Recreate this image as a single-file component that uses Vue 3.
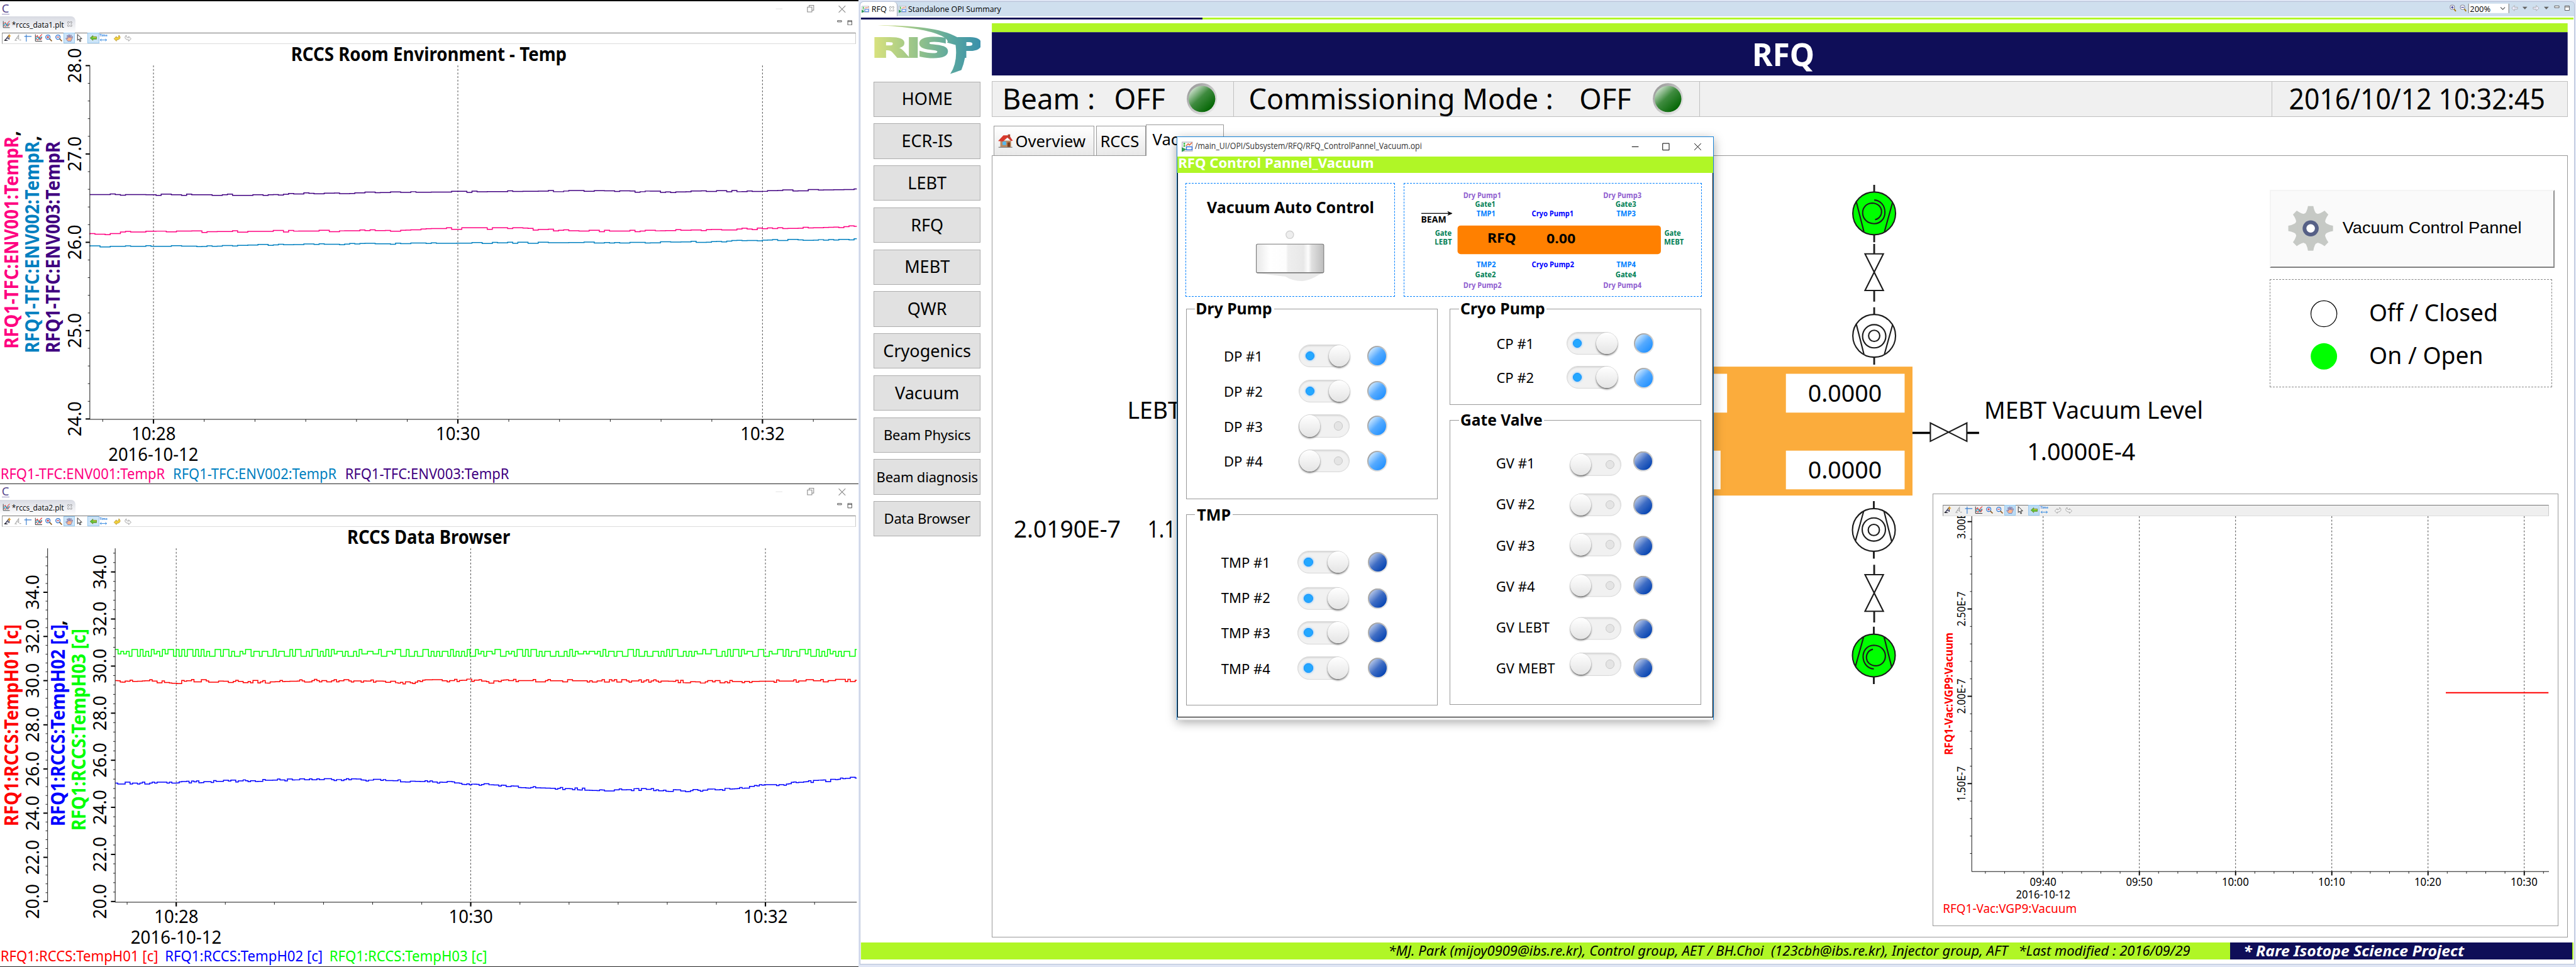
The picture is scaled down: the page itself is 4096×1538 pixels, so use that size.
<script setup>
import { h } from 'vue'

/* Side bearings (em) used to place text by the edges of its ink. */
const lsb = { C: 0.06, O: 0.06, Q: 0.06, G: 0.06, T: 0.01, V: 0, '*': 0.04, '/': 0.01, 2: 0.04, 3: 0.03, 0: 0.05, 1: 0.08 }
const rsb = { l: 0.08, m: 0.08, n: 0.08, r: 0.01, ']': 0.09, R: 0, T: 0.02, P: 0.04, M: 0.09, F: 0.02, Q: 0.05, ':': 0.08, t: 0.02, ',': 0.06 }

const Txt = (p) => {
  const s = +p.s
  const l = (lsb[p.t[0]] ?? 0.09) * s
  const r = (rsb[p.t[p.t.length - 1]] ?? 0.045) * s
  const a = p.rot ? { transform: `translate(${p.y} ${+p.a + l}) rotate(-90)` } : { x: +p.a - l, y: p.y }
  const ink = Math.abs(p.b - p.a)
  return h('text', {
    ...a,
    textLength: ink + l + r,
    lengthAdjust: 'spacingAndGlyphs',
    'font-size': s,
    'font-weight': p.bold ? 700 : 400,
    'font-style': p.it ? 'italic' : 'normal',
    fill: p.c || '#000',
    style: 'white-space:pre'
  }, p.t)
}
Txt.props = ['t', 'a', 'b', 'y', 's', 'bold', 'it', 'c', 'rot']

function rng(seed) {
  let v = seed
  return () => {
    v = (v * 16807) % 2147483647
    return v / 2147483647
  }
}

function trend(keys, x) {
  for (let i = 1; i < keys.length; i++) {
    if (x <= keys[i][0]) {
      const [x0, y0] = keys[i - 1]
      const [x1, y1] = keys[i]
      return y0 + ((y1 - y0) * (x - x0)) / (x1 - x0)
    }
  }
  return keys[keys.length - 1][1]
}

function steps(keys, step, noise, seed, levels) {
  const rand = rng(seed)
  let x = keys[0][0]
  let k = 0
  const end = keys[keys.length - 1][0]
  let d = `M${x} ${trend(keys, x).toFixed(1)}`
  while (x < end) {
    const nx = Math.min(end, x + step * (rand() > 0.7 ? 2 : 1))
    let n
    if (levels) {
      const half = levels.length / 2
      n = levels[(k++ % 2) * half + Math.floor(rand() * half)]
    } else {
      n = (Math.round(rand() * 2) - 1) * noise
    }
    d += `V${(trend(keys, x) + n).toFixed(1)}H${nx.toFixed(1)}`
    x = nx
  }
  return d
}

function range(from, to, step) {
  const out = []
  for (let v = from; step > 0 ? v <= to + 0.5 : v >= to - 0.5; v += step) out.push(v)
  return out
}

const charts = [
  {
    file: '*rccs_data1.plt',
    view: '0 99 1921 981',
    title: { t: 'RCCS Room Environment - Temp', a: 655, b: 1266, y: 137 },
    top: 147, bottom: 939, left: 201,
    yTitles: [
      { t: 'RFQ1-TFC:ENV001:TempR', a: 777, b: 306, y: 41, c: '#ff0080', comma: 302 },
      { t: 'RFQ1-TFC:ENV002:TempR', a: 787, b: 317, y: 87, c: '#0080c0', comma: 313 },
      { t: 'RFQ1-TFC:ENV003:TempR', a: 787, b: 317, y: 134, c: '#400080' }
    ],
    axes: [{ x: 201, base: 182, ticks: [28, 27, 26, 25, 24].map((v, i) => [v.toFixed(1), 147.4 + i * 197.7]), minor: range(147.4, 938, 39.54) }],
    xTicks: [['10:28', 343.4], ['10:30', 1024.4], ['10:32', 1706]],
    xMinor: range(229.8, 1917, 113.57),
    labelY: 986, dateY: 1032, date: [244, 442],
    legendY: 1073,
    legend: [
      { t: 'RFQ1-TFC:ENV001:TempR', a: 4, b: 369, c: '#ff0080' },
      { t: 'RFQ1-TFC:ENV002:TempR', a: 390, b: 753, c: '#0080c0' },
      { t: 'RFQ1-TFC:ENV003:TempR', a: 775, b: 1139, c: '#400080' }
    ],
    series: [
      { c: '#400080', d: steps([[201, 436], [600, 436.5], [700, 433], [960, 430.5], [1250, 428], [1500, 430], [1700, 427.5], [1917, 424.5]], 11.4, 1.4, 71) },
      { c: '#ff0080', d: steps([[201, 525], [235, 524], [255, 520], [450, 519], [700, 517.5], [900, 516], [960, 512], [1150, 512], [1290, 517.5], [1450, 517.5], [1620, 513.5], [1780, 511.5], [1917, 507]], 11.4, 1.7, 913) },
      { c: '#0080c0', d: steps([[201, 552], [420, 551.5], [560, 549], [800, 546.5], [1000, 545], [1100, 544], [1250, 543.5], [1450, 543], [1600, 541], [1700, 538], [1917, 536]], 11.4, 1.2, 3301) }
    ]
  },
  {
    file: '*rccs_data2.plt',
    view: '0 1179 1921 983',
    title: { t: 'RCCS Data Browser', a: 780.7, b: 1141, y: 1217 },
    top: 1227, bottom: 2019, left: 257.7,
    yTitles: [
      { t: 'RFQ1:RCCS:TempH01 [c]', a: 1845, b: 1401, y: 41, c: '#f00' },
      { t: 'RFQ1:RCCS:TempH02 [c]', a: 1845, b: 1401, y: 145, c: '#00f', comma: 1397 },
      { t: 'RFQ1:RCCS:TempH03 [c]', a: 1855, b: 1411, y: 191, c: '#0f0' }
    ],
    axes: [
      { x: 106.5, base: 87, ticks: range(0, 7, 1).map((i) => [(20 + i * 2).toFixed(1), 2017.4 - i * 98.86]), minor: range(2017.4, 1240, -19.77) },
      { x: 257.7, base: 238, ticks: range(0, 7, 1).map((i) => [(20 + i * 2).toFixed(1), 2017.4 - i * 105.37]), minor: range(2017.4, 1230, -21.07) }
    ],
    xTicks: [['10:28', 394.3], ['10:30', 1053.2], ['10:32', 1712.6]],
    xMinor: range(284.4, 1900, 109.87),
    labelY: 2065, dateY: 2112, date: [294, 494],
    legendY: 2152,
    legend: [
      { t: 'RFQ1:RCCS:TempH01 [c]', a: 4, b: 351, c: '#f00' },
      { t: 'RFQ1:RCCS:TempH02 [c]', a: 372, b: 719, c: '#00f' },
      { t: 'RFQ1:RCCS:TempH03 [c]', a: 740, b: 1087, c: '#0f0' }
    ],
    series: [
      { c: '#0f0', d: steps([[258, 1453.3], [1917, 1453.3]], 6.2, 0, 77, [0, 4.3, 0, 4.3, 15.3, 10, 15.3, 15.3]) },
      { c: '#f00', d: steps([[258, 1523], [300, 1525], [330, 1523], [385, 1529], [420, 1523], [480, 1524], [600, 1526], [700, 1523], [880, 1524.5], [910, 1529], [950, 1524], [1060, 1522], [1100, 1527], [1140, 1523], [1480, 1524], [1560, 1526], [1660, 1525], [1917, 1522.5]], 5.5, 2.6, 5151) },
      { c: '#00f', d: steps([[258, 1752.5], [390, 1752.5], [420, 1750], [560, 1747], [620, 1745.5], [760, 1744.5], [900, 1747.5], [1000, 1751], [1060, 1755], [1120, 1757], [1200, 1763], [1310, 1766], [1350, 1768], [1450, 1766.5], [1520, 1770], [1600, 1767.5], [1665, 1764], [1710, 1756], [1750, 1756], [1790, 1750], [1850, 1747], [1890, 1742], [1917, 1741]], 5.5, 2.1, 401) }
    ]
  }
]

const tools = ['ann', 'annoff', 'axis', 'trace', 'zin', 'zout', 'hand', 'ptr', 'gap', 'scroll', 'time', 'gap', 'undo', 'redo']

const nav = ['HOME', 'ECR-IS', 'LEBT', 'RFQ', 'MEBT', 'QWR', 'Cryogenics', 'Vacuum', 'Beam Physics', 'Beam diagnosis', 'Data Browser']

/* Label, on/off state, vertical shift of switch and of lamp. */
const groups = {
  dry: { title: 'Dry Pump', tw: 176, lamp: 'sky', rows: [['DP #1', 1, 0, 0], ['DP #2', 1, 0, 0], ['DP #3', 0, 0, 0], ['DP #4', 0, 0, 0]] },
  tmp: { title: 'TMP', tw: 84, lamp: 'deep', rows: [['TMP #1', 1, 0, 0], ['TMP #2', 1, 2.5, 2.5], ['TMP #3', 1, 0, 0], ['TMP #4', 1, 0, 0]] },
  cryo: { title: 'Cryo Pump', tw: 196, lamp: 'sky', rows: [['CP #1', 1, 0, 0], ['CP #2', 1, 0, 1.5]] },
  gate: { title: 'Gate Valve', tw: 190, lamp: 'deep', rows: [['GV #1', 0, 4, -3], ['GV #2', 0, 2.5, 3], ['GV #3', 0, -0.5, 3], ['GV #4', 0, -1, -0.5], ['GV LEBT', 0, 3.5, 4.5], ['GV MEBT', 0, -8.5, 0.5]] }
}
const columns = [['dry', 'tmp'], ['cryo', 'gate']]

const scheme = [
  ['Dry Pump1', 3275.5, 3358, 441.8, '#9060d0'], ['Gate1', 3301.5, 3345, 461.4, '#008055'], ['TMP1', 3303.7, 3345, 482.8, '#0080ff'],
  ['Cryo Pump1', 3428, 3520, 482.8, '#0000ff'],
  ['Dry Pump3', 3588.6, 3672, 441.8, '#9060d0'], ['Gate3', 3615.5, 3660, 461.4, '#008055'], ['TMP3', 3616.8, 3659, 482.8, '#0080ff'],
  ['TMP2', 3303.7, 3346, 597.6, '#0080ff'], ['Gate2', 3301.5, 3346, 620.3, '#008055'], ['Dry Pump2', 3275.5, 3359, 643.5, '#9060d0'],
  ['Cryo Pump2', 3428, 3521, 597.6, '#0000ff'],
  ['TMP4', 3616.8, 3659, 597.6, '#0080ff'], ['Gate4', 3615.5, 3660, 620.3, '#008055'], ['Dry Pump4', 3588.6, 3672, 643.5, '#9060d0'],
  ['Gate', 3211.5, 3247, 527, '#008055'], ['LEBT', 3211.5, 3248, 546, '#008055'],
  ['Gate', 3724.8, 3760, 527, '#008055'], ['MEBT', 3724.8, 3767, 546, '#008055']
]

const vacY = range(1167.2, 1800, 195.43)
const vacLabels = ['3.00E-7', '2.50E-7', '2.00E-7', '1.50E-7']
const vacX = ['09:40', '09:50', '10:00', '10:10', '10:20', '10:30'].map((t, i) => [t, 4571.7 + i * 215.3])
</script>

<template>
  <div class="screen">
    <svg class="defs" width="0" height="0">
      <defs>
        <symbol id="i-ann" viewBox="0 0 20 20"><path d="M3 16L13 3V14M7 11h7M4 16h6" fill="none" stroke="#224" stroke-width="1.8" /><path d="M1 16h6" stroke="#111" stroke-width="2" /><path d="M14 1v8M10.500 5h7" stroke="#e8a020" stroke-width="2" /></symbol>
        <symbol id="i-annoff" viewBox="0 0 20 20"><path d="M3 16L12 3V14M7 11h6M2 16h6M14 15h4" fill="none" stroke="#aaa" stroke-width="1.800" /></symbol>
        <symbol id="i-axis" viewBox="0 0 20 20"><path d="M6 1v18M1 6h18" fill="none" stroke="#3a7fd0" stroke-width="1.8" /></symbol>
        <symbol id="i-trace" viewBox="0 0 20 20"><path d="M2 1v17h17" fill="none" stroke="#333" stroke-width="1.5" /><path d="M3 8l4-4 4 7 4-7 4-3M3 12l5 3 4-6 3 5 4-6" fill="none" stroke="#d22" stroke-width="1.6" /><path d="M3 13l5-6 4 7 6-8" fill="none" stroke="#19a7c7" stroke-width="1.8" /></symbol>
        <symbol id="i-zin" viewBox="0 0 20 20"><circle cx="8" cy="8" r="5.500" fill="#e4f0ff" stroke="#3478d0" stroke-width="1.8" /><path d="M12 12l6 6" stroke="#8a5a20" stroke-width="2.600" /><path d="M8 5v6M5 8h6" stroke="#c22" stroke-width="1.6" /></symbol>
        <symbol id="i-zout" viewBox="0 0 20 20"><circle cx="8" cy="8" r="5.500" fill="#e4f0ff" stroke="#3478d0" stroke-width="1.8" /><path d="M12 12l6 6" stroke="#8a5a20" stroke-width="2.600" /><path d="M5 8h6" stroke="#c22" stroke-width="1.6" /></symbol>
        <symbol id="i-hand" viewBox="0 0 20 20"><path d="M6 18L1 11l2-1 3 2L4 4l2-.5L8 9V2h2l.6 7L13 2.500l1.800.5L13.500 10 17 6l1.500 1-3.500 8-1 3z" fill="#ffb58a" stroke="#5a6cb8" stroke-width="1.200" /></symbol>
        <symbol id="i-ptr" viewBox="0 0 20 20"><path d="M5 1v15l3.500-3.500L11 19l2.500-1-2.500-6h5z" fill="#fff" stroke="#222" stroke-width="1.500" /></symbol>
        <symbol id="i-scroll" viewBox="0 0 20 20"><path d="M2 10l7-6v3h9v6H9v3z" fill="#5fc23a" stroke="#6b8a1e" stroke-width="1.300" /><path d="M9 8.500h8" stroke="#f0d040" stroke-width="1.500" /></symbol>
        <symbol id="i-time" viewBox="0 0 20 20"><text x="0" y="7" font-size="8" font-weight="700" textLength="20" lengthAdjust="spacingAndGlyphs" fill="#2f86e0">Time</text><path d="M2 15h16M5 12l-3 3 3 3M15 12l3 3-3 3" fill="none" stroke="#2f86e0" stroke-width="1.500" /></symbol>
        <symbol id="i-undo" viewBox="0 0 20 20"><path d="M2 12l6-6v3c4 0 6-1 6-6 5 4 5 11-6 12v3z" fill="#f3d23c" stroke="#a88418" stroke-width="1.100" /></symbol>
        <symbol id="i-redo" viewBox="0 0 20 20"><path d="M18 12l-6-6v3c-4 0-6-1-6-6-5 4-5 11 6 12v3z" fill="#f4f4f4" stroke="#9a9a9a" stroke-width="1.300" /></symbol>
        <symbol id="i-undooff" viewBox="0 0 20 20"><path d="M2 12l6-6v3c4 0 6-1 6-6 5 4 5 11-6 12v3z" fill="#f4f4f4" stroke="#9a9a9a" stroke-width="1.300" /></symbol>
        <symbol id="i-opi" viewBox="0 0 26 24"><rect x="1" y="1" width="24" height="21" fill="#f6f6f4" stroke="#aab" stroke-width="1.500" /><circle cx="6" cy="5" r="2" fill="#2b3" /><circle cx="6" cy="10" r="2" fill="#2b3" /><path d="M10 10l5-5 3 3 6-6" fill="none" stroke="#e4572e" stroke-width="1.800" /><rect x="11" y="12" width="13" height="7" fill="#fff" stroke="#2f6fe0" stroke-width="2" /><path d="M0 13l11 5-11 6z" fill="#2e9a58" /></symbol>
        <linearGradient id="rim" x1="0" y1="0" x2="1" y2="1"><stop offset="0" stop-color="#8f8f8f" /><stop offset=".5" stop-color="#c4c4c4" /><stop offset="1" stop-color="#f0f0f0" /></linearGradient>
        <linearGradient id="glass" x1=".1" y1=".1" x2=".85" y2=".9"><stop offset="0" stop-color="#d6e6d6" /><stop offset=".45" stop-color="#3f8b3f" /><stop offset="1" stop-color="#006400" /></linearGradient>
        <linearGradient id="logo" x1="1953" y1="0" x2="2193" y2="0" gradientUnits="userSpaceOnUse"><stop offset="0" stop-color="#d9e27d" /><stop offset=".45" stop-color="#8fc08c" /><stop offset=".75" stop-color="#57a5a0" /><stop offset="1" stop-color="#3a90ab" /></linearGradient>
      </defs>
    </svg>

    <section class="plots">
      <article v-for="(c, ci) in charts" :key="c.file" class="plotwin" :class="{ second: ci }">
        <header class="caption">
          <span class="cs">C</span>
          <svg class="ctl" width="160" height="20" viewBox="0 0 160 20">
            <path d="M2 10h15" stroke="#e4e4e4" stroke-width="1.500" />
            <path d="M73 6h10v11H73zM77 6V2h10v11h-4" fill="none" stroke="#888" stroke-width="1.500" />
            <path d="M143 3l15 15M158 3l-15 15" stroke="#888" stroke-width="1.500" />
          </svg>
        </header>
        <div class="tabrow">
          <div class="filetab">
            <svg width="17" height="17"><use href="#i-trace" /></svg>
            <svg width="118" height="26" viewBox="24 0 118 26"><text class="seg" x="25" y="20" font-size="18.500" textLength="117" lengthAdjust="spacingAndGlyphs">{{ c.file }}</text></svg>
            <svg width="11" height="12" viewBox="0 0 11 12"><path d="M1 1h3l1.500 2L7 1h3v3L8 6l2 2v3H7L5.500 9 4 11H1V8l2-2-2-2z" fill="none" stroke="#777" stroke-width="1" /></svg>
          </div>
          <svg class="minmax" width="34" height="12" viewBox="0 0 34 12"><path d="M1 1h9v3H1zM24 1h9v10h-9zM24 3.500h9" fill="none" stroke="#555" stroke-width="1.400" /></svg>
        </div>
        <div class="toolbar">
          <template v-for="(t, i) in tools" :key="i">
            <i v-if="t === 'gap'" class="gap"></i>
            <span v-else class="tool" :class="{ on: t === 'hand' || t === 'scroll' }"><svg width="18" height="18"><use :href="'#i-' + t" /></svg></span>
          </template>
        </div>
        <svg class="chart" :viewBox="c.view">
          <Txt v-bind="c.title" s="43" bold="1" />
          <g stroke="#000" stroke-dasharray="4 4">
            <path v-for="x in c.xTicks" :key="x[0]" :d="`M${x[1]} ${c.top}V${c.bottom}`" />
          </g>
          <path v-for="s in c.series" :key="s.c" :d="s.d" fill="none" :stroke="s.c" stroke-width="2.100" />
          <g v-for="a in c.axes" :key="a.x">
            <path :d="`M${a.x} ${c.top}V${c.bottom}`" stroke="#000" stroke-width="1.300" />
            <path v-for="m in a.minor" :key="m" :d="`M${a.x - 4.5} ${m}h4.500`" stroke="#000" stroke-width="1.200" />
            <template v-for="t in a.ticks" :key="t[0]">
              <path :d="`M${a.x - 9.5} ${t[1]}h9.500`" stroke="#000" stroke-width="2.800" />
              <Txt :t="t[0]" :a="t[1] + 37.3" :b="t[1] - 37.3" :y="a.base" s="42" rot="1" />
            </template>
          </g>
          <path :d="`M${c.left} ${c.bottom}H1917`" stroke="#000" stroke-width="1.300" />
          <path v-for="m in c.xMinor" :key="m" :d="`M${m} ${c.bottom}v5.500`" stroke="#000" stroke-width="1.200" />
          <template v-for="x in c.xTicks" :key="x[0]">
            <path :d="`M${x[1]} ${c.bottom}v9.500`" stroke="#000" stroke-width="3" />
            <Txt :t="x[0]" :a="x[1] - 46" :b="x[1] + 48" :y="c.labelY" s="42" />
          </template>
          <Txt t="2016-10-12" :a="c.date[0]" :b="c.date[1]" :y="c.dateY" s="42" />
          <template v-for="y in c.yTitles" :key="y.c">
            <Txt :t="y.t" :a="y.a" :b="y.b" :y="y.y" :c="y.c" s="42" bold="1" rot="1" />
            <text v-if="y.comma" :transform="`translate(${y.y} ${y.comma + 3}) rotate(-90)`" font-size="42" font-weight="700">,</text>
          </template>
          <Txt v-for="l in c.legend" :key="l.c" v-bind="l" :y="c.legendY" s="33" />
        </svg>
      </article>
    </section>

    <section class="opi">
      <header class="tabs">
        <div class="optab sel"><svg width="17" height="17"><use href="#i-opi" /></svg><svg width="36" height="26" viewBox="0 0 36 26"><text class="seg" x="1" y="19.500" font-size="19" textLength="34" lengthAdjust="spacingAndGlyphs">RFQ</text></svg><svg width="11" height="12" viewBox="0 0 11 12"><path d="M1 1h3l1.500 2L7 1h3v3L8 6l2 2v3H7L5.500 9 4 11H1V8l2-2-2-2z" fill="none" stroke="#777" /></svg></div>
        <div class="optab"><svg width="17" height="17"><use href="#i-opi" /></svg><svg width="210" height="26" viewBox="0 0 210 26"><text class="seg" x="0" y="19.500" font-size="19" textLength="208" lengthAdjust="spacingAndGlyphs">Standalone OPI Summary</text></svg></div>
        <svg class="view" width="274" height="30" viewBox="5478 2 274 30">
          <g stroke-width="1.500"><circle cx="5484" cy="14" r="5" fill="#fff" stroke="#889" /><path d="M5488 18l4 5" stroke="#a70" stroke-width="2.500" /><path d="M5481 14h6M5484 11v6" stroke="#228" /><circle cx="5507" cy="14" r="5" fill="#fff" stroke="#889" /><path d="M5511 18l4 5" stroke="#a70" stroke-width="2.500" /><path d="M5504 14h6" stroke="#228" /></g>
          <rect x="5520.500" y="6" width="90" height="21" fill="#fff" /><path d="M5520.500 6v21M5610.500 6v21" stroke="#777" stroke-width="1.400" />
          <text class="seg" x="5523.500" y="24" font-size="19" textLength="46" lengthAdjust="spacingAndGlyphs">200%</text>
          <path d="M5592 14l5 5 5-5" fill="none" stroke="#444" stroke-width="1.500" />
          <path d="M5617 16l6-6v4h7v4h-7v4zM5678 16l-6-6v4h-7v4h7v4z" fill="#eef" stroke="#aaa" stroke-width="1.300" />
          <path d="M5641 13h11l-5.500 6zM5689 13h11l-5.500 6z" fill="#666" />
          <path d="M5713 11h10v4h-10zM5736 11h10v10h-10zM5736 13.500h10" fill="#fff" stroke="#555" stroke-width="1.300" />
        </svg>
      </header>
      <div class="page">
        <div class="line"><i></i></div>
        <div class="cols">
          <nav>
            <svg class="logo" width="241" height="114" viewBox="1952 53 241 114">
              <g class="mark" fill="url(#logo)" stroke="url(#logo)" stroke-width="3" font-weight="700" font-size="60">
                <text x="1948" y="128" textLength="84" lengthAdjust="spacingAndGlyphs">R</text>
                <text x="2027" y="128" textLength="31" lengthAdjust="spacingAndGlyphs">I</text>
                <text x="2051" y="128" textLength="74" lengthAdjust="spacingAndGlyphs">S</text>
                <text x="2136" y="128" textLength="60" lengthAdjust="spacingAndGlyphs">P</text>
              </g>
              <path d="M1963 56C2040 56 2105 62 2141 83H2160Q2163 125 2150 156Q2138 161 2125 165Q2142 140 2137 100L2118 95C2126 88 2100 62 1963 56Z" fill="url(#logo)" />
            </svg>
            <button v-for="(n, i) in nav" :key="n" :class="{ small: i > 7 }">{{ n }}</button>
          </nav>
          <main>
            <svg class="banner" width="3526" height="117" viewBox="2219 52 3526 117">
              <rect x="2219" y="52" width="3526" height="20" fill="#b0f626" />
              <rect x="2219" y="72" width="3526" height="97" fill="#0f0e58" />
              <Txt t="RFQ" a="3926.500" b="4056" y="147.300" s="71" bold="1" c="#fff" />
            </svg>
            <div class="status">
              <svg width="540" height="78" viewBox="2219 183 540 78"><Txt t="Beam :" a="2247" b="2444" y="244.500" s="65" /><Txt t="OFF" a="2496" b="2605" y="244.500" s="65" /><ellipse cx="2689" cy="221.500" rx="34" ry="35.500" fill="url(#rim)" /><ellipse cx="2689" cy="221.500" rx="30" ry="29.500" fill="url(#glass)" /></svg>
              <svg width="1043" height="78" viewBox="2759 183 1043 78"><Txt t="Commissioning Mode :" a="2796" b="3469.400" y="244.500" s="65" /><Txt t="OFF" a="3537" b="3648" y="244.500" s="65" /><ellipse cx="3731.600" cy="221.500" rx="34" ry="35.500" fill="url(#rim)" /><ellipse cx="3731.600" cy="221.500" rx="30" ry="29.500" fill="url(#glass)" /></svg>
              <i class="grow"></i>
              <svg width="661" height="78" viewBox="5084 183 661 78"><Txt t="2016/10/12 10:32:45" a="5124" b="5693" y="245.500" s="64" /></svg>
            </div>
            <div class="pagetabs">
              <div class="pt over">
                <svg width="33" height="32" viewBox="0 0 33 32"><path d="M5 15h24v15H5z" fill="#b98a62" /><path d="M10 17h8v8h-8z" fill="#55b8ee" /><path d="M21 19h6v11h-6z" fill="#7a3f1c" /><path d="M0 16L12 3h13l8 12-4 1-8-8-10 9z" fill="#d8382c" /><path d="M22 1h5v8h-5z" fill="#a8452f" /><path d="M1 30h31" stroke="#888" stroke-width="2" /></svg>
                <span>Overview</span>
              </div>
              <div class="pt rccs">RCCS</div>
              <div class="pt vac">Vacuum</div>
            </div>
            <div class="canvas">
              <svg class="diagram" width="3526" height="1750" viewBox="2219 348 3526 1750">
                <Txt t="LEBT" a="2527" b="2641" y="937" s="54" />
                <Txt t="2.0190E-7" a="2270" b="2505" y="1203" s="54" />
                <Txt t="1.1" a="2572" b="2628" y="1203" s="54" />
                <rect x="3300" y="821" width="979" height="288.500" fill="#fbac3c" />
                <path d="M3500 836.800h364.200v87.200H3500zM3500 1009h349.600v86.700H3500zM3995.800 836.800h265.600v87.200h-265.600zM3995.800 1009h265.600v86.700h-265.600z" fill="#fff" />
                <Txt t="0.0000" a="4047.900" b="4207.800" y="899.300" s="55" />
                <Txt t="0.0000" a="4047.900" b="4207.800" y="1071" s="55" />
                <Txt t="MEBT Vacuum Level" a="4444.300" b="4924.900" y="937.700" s="54" />
                <Txt t="1.0000E-4" a="4540" b="4775" y="1030" s="54" />
                <g fill="none" stroke="#1c1c1c" stroke-width="3">
                  <g v-for="p in [[4193.3, 478, 0, 1], [4193.3, 752, 0, 0], [4192.500, 1186.500, 180, 0], [4192.500, 1467.500, 180, 1]]" :key="p[1]" :transform="`translate(${p[0]} ${p[1]}) rotate(${p[2]})`">
                    <path d="M0-64V-47M0 48V64.500" stroke-width="4" />
                    <circle r="47.800" :fill="p[3] ? '#0f0' : '#fff'" />
                    <path d="M-40-26L-23 41M41-24L23 41" />
                    <path v-if="p[3]" d="M0-30C31-28 33 22 0 23C-33 22-34-21-5-23C23-22 22 10 2 14" />
                    <template v-else><circle r="26" cy="1" /><circle r="12.500" cy="0" /></template>
                  </g>
                  <g v-for="y in [609.500, 1327.500]" :key="y" :transform="`translate(4193.300 ${y})`">
                    <path d="M0-63v22M0 41v25" stroke-width="4" /><path d="M-20.500-41h41L-20.500 41h41z" fill="#fff" />
                  </g>
                  <path d="M4279 969.300h40M4400.600 969.300H4428" stroke="#000" stroke-width="5" />
                  <path d="M4319 947v41L4400.600 947v41z" fill="#fff" />
                </g>
              </svg>
              <button class="vcp">
                <svg width="111" height="102" viewBox="-55 -51 111 102"><g fill="#c6c9c5"><circle r="36" /><path v-for="a in 8" :key="a" d="M-16-29Q-8-36-6-50H6Q8-36 16-29z" :transform="`rotate(${a * 45})`" /></g><circle r="18" fill="#566086" /><circle r="9.500" fill="#fff" /></svg>
                <svg width="420" height="60" viewBox="5235 480 420 60"><Txt t="Vacuum Control Pannel" a="5243" b="5641" y="522.300" s="36" /></svg>
              </button>
              <div class="states">
                <svg width="630" height="238" viewBox="5079 627 630 238">
                  <circle cx="5198.800" cy="703" r="29" fill="#fff" stroke="#000" stroke-width="1.800" /><circle cx="5198.800" cy="798.400" r="29.500" fill="#0f0" />
                  <Txt t="Off / Closed" a="5303.300" b="5585.600" y="720.400" s="54" /><Txt t="On / Open" a="5303.300" b="5551" y="815.700" s="54" />
                </svg>
              </div>
              <div class="vacbox">
                <div class="toolbar grey">
                  <template v-for="(t, i) in tools" :key="i">
                    <i v-if="t === 'gap'" class="gap"></i>
                    <span v-else class="tool" :class="{ on: t === 'hand' || t === 'scroll' }"><svg width="18" height="18"><use :href="'#i-' + (t === 'undo' ? 'undooff' : t)" /></svg></span>
                  </template>
                </div>
                <svg class="vacchart" width="1357" height="900" viewBox="4347 1155 1357 900">
                  <path v-for="x in vacX" :key="x[0]" :d="`M${x[1]} 1155V1950`" stroke="#000" stroke-dasharray="4 4" />
                  <path d="M4412 1155V1950.300H5704" fill="none" stroke="#000" stroke-width="1.300" />
                  <path v-for="m in range(1206.300, 1930, 39.090)" :key="m" :d="`M4408 ${m}h4`" stroke="#000" stroke-width="1.200" />
                  <path v-for="m in range(4442.500, 5700, 43.060)" :key="m" :d="`M${m} 1950v5`" stroke="#000" stroke-width="1.200" />
                  <template v-for="(y, i) in vacY" :key="y">
                    <path :d="`M4402.500 ${y}h9.500`" stroke="#000" stroke-width="2.600" />
                    <Txt :t="vacLabels[i]" :a="y + 38" :b="y - 38" y="4397" s="26" rot="1" />
                  </template>
                  <template v-for="x in vacX" :key="x[0]">
                    <path :d="`M${x[1]} 1950v9`" stroke="#000" stroke-width="2.600" />
                    <Txt :t="x[0]" :a="x[1] - 28.500" :b="x[1] + 28.500" y="1983" s="26" />
                  </template>
                  <Txt t="2016-10-12" a="4512" b="4631.500" y="2010.700" s="26" />
                  <Txt t="RFQ1-Vac:VGP9:Vacuum" a="1687" b="1417.600" y="4370" s="26" bold="1" rot="1" c="#f00" />
                  <Txt t="RFQ1-Vac:VGP9:Vacuum" a="4350" b="4644.500" y="2043" s="29" c="#f00" />
                  <path d="M5472.700 1550H5702.400" stroke="#f00" stroke-width="2.800" />
                </svg>
              </div>
            </div>
          </main>
        </div>
        <footer>
          <svg width="3063" height="38" viewBox="1926 2112 3063 38"><Txt t="*MJ. Park (mijoy0909@ibs.re.kr), Control group, AET / BH.Choi  (123cbh@ibs.re.kr), Injector group, AFT   *Last modified : 2016/09/29" a="3107" b="4899" y="2141" s="31" it="1" /></svg>
          <div class="proj"><svg width="766" height="38" viewBox="4989 2112 766 38"><Txt t="* Rare Isotope Science Project" a="5020" b="5512" y="2143" s="32" bold="1" it="1" c="#fff" /></svg></div>
        </footer>
      </div>
    </section>

    <section class="dialog">
      <header class="dcap">
        <svg width="25" height="24"><use href="#i-opi" /></svg>
        <svg width="520" height="30" viewBox="2669 316 520 30"><text class="seg" x="2673" y="335.500" font-size="19.500" textLength="508" lengthAdjust="spacingAndGlyphs" fill="#333">/main_UI/OPI/Subsystem/RFQ/RFQ_ControlPannel_Vacuum.opi</text></svg>
        <i class="grow"></i>
        <svg width="158" height="18" viewBox="3650 318.500 158 18"><path d="M3651 327.500h15M3720 320h14.500v15H3720zM3791 320l15 15M3806 320l-15 15" fill="none" stroke="#000" stroke-width="1.400" /></svg>
      </header>
      <div class="dbar"><svg width="1198" height="36" viewBox="2634 350 1198 36"><Txt t="RFQ Control Pannel_Vacuum" a="2638.500" b="3071.500" y="375" s="31" bold="1" c="#fff" /></svg></div>
      <div class="dbody">
        <div class="drow">
          <svg class="dash" width="466" height="252" viewBox="2653 410 466 252">
            <defs>
              <linearGradient id="key"><stop offset="0" stop-color="#e8e8e8" /><stop offset=".2" stop-color="#fff" /><stop offset=".44" stop-color="#fdfdfd" /><stop offset=".47" stop-color="#eee" /><stop offset=".7" stop-color="#e8e8e8" /><stop offset=".77" stop-color="#fdfdfd" /><stop offset=".82" stop-color="#e0e0e0" /><stop offset="1" stop-color="#bdbdbd" /></linearGradient>
            </defs>
            <Txt t="Vacuum Auto Control" a="2699.600" b="3071" y="476.600" s="35" bold="1" />
            <ellipse cx="2885" cy="524.500" rx="8.500" ry="8.500" fill="#eee" stroke="#d2d2d2" stroke-width="2" />
            <path d="M2811 608H2960Q2930 628 2912 628Q2890 628 2875 618Q2840 614 2811 611z" fill="#e9e9e9" />
            <rect x="2810" y="545.500" width="151" height="64" rx="3" fill="url(#key)" stroke="#777" stroke-width="1.500" /><path d="M2812 609.500h147" stroke="#777" stroke-width="2" />
          </svg>
          <svg class="dash" width="664" height="252" viewBox="3142 410 664 252">
            <Txt v-for="(s, i) in scheme" :key="i" :t="s[0]" :a="s[1]" :b="s[2]" :y="s[3]" :c="s[4]" s="17.500" bold="1" />
            <Txt t="BEAM" a="3181" b="3234" y="497" s="19.500" bold="1" />
            <path d="M3180 476.700H3246" stroke="#000" stroke-width="2" /><path d="M3239 472.500L3249 476.700L3239 481L3242 476.700z" stroke="#000" />
            <rect x="3261" y="503.800" width="455" height="64.200" rx="7" fill="#ff8000" />
            <Txt t="RFQ" a="3330.500" b="3390.400" y="542" s="31" bold="1" /><Txt t="0.00" a="3461.500" b="3523.500" y="543.400" s="31" bold="1" />
          </svg>
        </div>
        <div class="dcols">
          <div v-for="(col, ci) in columns" :key="ci" class="dcol">
            <div v-for="g in col" :key="g" class="group" :class="g">
              <svg class="legend" :width="groups[g].tw" height="44" :viewBox="`0 0 ${groups[g].tw} 44`"><Txt :t="groups[g].title" a="5" :b="groups[g].tw - 5" y="35" s="35" bold="1" /></svg>
              <div v-for="r in groups[g].rows" :key="r[0]" class="ctrl">
                <span class="name">{{ r[0] }}</span>
                <span class="switch" :class="{ act: r[1] }" :style="{ transform: `translateY(${r[2]}px)` }"><i class="dot"></i><i class="knob"></i></span>
                <span class="lamp" :class="groups[g].lamp" :style="{ transform: `translateY(${r[3]}px)` }"></span>
              </div>
            </div>
          </div>
        </div>
      </div>
    </section>
  </div>
</template>

<style>
html, body { margin: 0; overflow: hidden; background: #fff; }
</style>

<style scoped>
.screen { position: relative; zoom: 0.71067; display: flex; width: 5764px; height: 2164px; overflow: hidden; background: #fff; font-family: "Noto Sans", sans-serif; color: #000; line-height: 1; }
.screen * { box-sizing: border-box; }
.screen svg { display: block; flex: none; }
.seg { font-family: "Open Sans", "Noto Sans", sans-serif; }
.mark { font-family: "DejaVu Sans", sans-serif; }
.defs { position: absolute; }
.grow { flex: 1; }

.plots { width: 1921px; height: 2164px; flex: none; background: #fff; border-bottom: 2px solid #222; }
.plotwin { height: 1080px; border-top: 4px solid #000; }
.plotwin.second { height: 1082px; padding-top: 2px; border-top: 0; }
.caption { height: 34px; display: flex; justify-content: space-between; align-items: center; padding: 0 28px 0 4px; }
.second .caption { height: 36px; border-top: 2px solid #222; }
.cs { font-size: 26px; line-height: 20px; height: 24px; color: #55468c; border-bottom: 2px solid #9b93c0; }
.tabrow { height: 36px; display: flex; justify-content: space-between; }
.filetab { width: 169px; height: 36px; display: flex; align-items: center; gap: 3px; padding-left: 5px; border-radius: 0 10px 0 0; background: linear-gradient(#d8dae2, #fff); }
.filetab svg:last-child { margin-left: 5px; margin-bottom: 2px; }
.minmax { margin: 8px 14px 0 0; }
.toolbar { height: 25px; display: flex; align-items: center; margin: 0 6px 0 4px; border-top: 2px solid #777; border-left: 1px solid #999; border-right: 1px solid #ccc; border-bottom: 1px solid #ddd; }
.tool { width: 23px; height: 21px; display: flex; align-items: center; justify-content: center; }
.tool.on { background: #cce4f7; outline: 1px solid #99c9ef; outline-offset: -1px; }
.gap { width: 8px; }
.chart { width: 1921px; height: 981px; overflow: visible; }
.second .chart { height: 983px; }

.opi { position: relative; width: 3843px; height: 2164px; flex: none; padding: 3px 3px 4px 2px; background: #dfe5f4; display: flex; flex-direction: column; }
.tabs { height: 34px; display: flex; align-items: stretch; background: #cfdfee; border: 1px solid #b4bfd6; border-bottom: 0; border-radius: 8px 8px 0 0; }
.optab { display: flex; align-items: center; gap: 3px; padding: 0 4px; }
.optab.sel { width: 83px; background: #fff; border-right: 1px solid #aab; border-radius: 8px 8px 0 0; gap: 3px; }
.optab.sel svg:last-child { margin-left: 3px; margin-bottom: 2px; }
.view { margin-left: auto; margin-right: 5px; }
.page { height: 2122px; flex: none; background: #fff; border: 1px solid #b4bfd6; border-top: 0; padding: 2px 2px 0 2px; display: flex; flex-direction: column; }
.line { height: 4px; background: #b0f626; flex: none; }
.line i { display: block; width: 764px; height: 4px; background: #0f0e58; }
.cols { flex: 1; display: flex; align-items: flex-start; }
nav { width: 293px; padding: 10px 26px 0 27px; }
.logo { margin-bottom: 15.500px; }
nav button { display: block; width: 240px; height: 79px; margin: 0 0 14.950px 1px; padding: 0 0 2px; background: #e1e1e1; border: 1.500px solid #adadad; font: 38px/1 "Noto Sans", sans-serif; color: #000; text-align: center; white-space: nowrap; }
nav button.small { font-size: 31px; letter-spacing: -.3px; }
main { width: 3526px; padding-top: 9px; }
.banner { margin-bottom: 13px; }
.status { height: 80px; display: flex; background: #f0f0f0; border: 1.500px solid #c0c0c0; }
.status svg { border-right: 1.500px solid #c0c0c0; }
.status svg:last-child { border-right: 0; border-left: 1.500px solid #c0c0c0; }
.pagetabs { height: 86px; display: flex; align-items: flex-end; padding-left: 4px; }
.pt { display: flex; align-items: center; border: 1.500px solid #999; border-bottom: 0; font-size: 36px; height: 66px; background: linear-gradient(#fff, #e8e8e8); }
.over { width: 225px; padding-left: 9px; gap: 5px; margin-right: 4px; }
.rccs { width: 112px; padding-left: 8px; }
.vac { position: relative; width: 174px; height: 71px; margin-bottom: -1.500px; padding: 0 0 4px 13px; background: #fff; z-index: 1; }
.canvas { position: relative; height: 1750px; border: 1.500px solid #999; }
.diagram { position: absolute; left: -2px; top: -2px; }
.vcp { position: absolute; left: 2857px; top: 75px; width: 638px; height: 175px; padding: 0 0 0 34px; display: flex; align-items: center; gap: 8px; background: #fafafa; border: 4px solid; border-color: #f4f4f4 #909090 #808080 #f4f4f4; }
.vcp svg + svg { margin-top: -3px; }
.states { position: absolute; left: 2857px; top: 276px; border: 1.500px dashed #888; width: 633px; height: 241px; }
.vacbox { position: absolute; left: 2104px; top: 755px; width: 1400px; height: 968px; border: 1.500px solid #999; padding: 24px 20px 0; }
.vacbox .toolbar { margin: 0 0 1px; background: #efefef; }
.grey .tool.on { background: #bcdcf4; }
footer { height: 38px; display: flex; background: #b0f626; flex: none; }
.page footer { margin-bottom: 10px; }
.proj { background: #0f0e58; }

.dialog { position: absolute; z-index: 5; left: 2633px; top: 306px; width: 1201px; height: 1305px; background: #fff; border: 1.500px solid #1883d7; box-shadow: 0 6px 22px rgba(0, 0, 0, .36); border-bottom-width: 2px; }
.dcap { height: 43px; display: flex; align-items: center; padding: 0 25px 0 10px; }
.dbar { background: #b0f626; overflow: hidden; }
.dbody { height: 1219px; border: 1.500px solid #000; border-top: 0; background: #fff; padding: 24px 24px 0 18px; box-shadow: 0 6px 0 #f0f0f0; }
.drow { display: flex; gap: 23px; }
.dash { outline: 1.500px dashed #0080ff; }
.dcols { display: flex; gap: 27px; padding-top: 28px; }
.dcol { width: 563px; display: flex; flex-direction: column; }
.group { position: relative; border: 1.500px solid #999; }
.legend { position: absolute; left: 19px; top: -23px; background: #fff; }
.dry { height: 427px; margin-bottom: 34px; padding-top: 66px; }
.tmp { height: 427px; padding-top: 66px; }
.cryo { height: 216px; margin-bottom: 33px; padding-top: 39px; }
.gate { height: 638px; padding-top: 49px; }
.ctrl { display: flex; align-items: center; height: 78.300px; }
.tmp .ctrl { height: 79px; }
.cryo .ctrl { height: 76px; }
.gate .ctrl { height: 91.900px; }
.name { width: 168px; margin-left: 83px; font-size: 31px; white-space: nowrap; }
.tmp .name { width: 171px; margin-left: 77px; }
.cryo .name { width: 157px; margin-left: 103px; }
.gate .name { width: 166px; margin-left: 102px; }
.switch { position: relative; width: 114px; height: 51px; border-radius: 26px; background: #f1f1f1; border: 1.500px solid #d8d8d8; box-shadow: inset 0 2px 3px #d4d4d4; }
.knob { position: absolute; left: -1px; top: 0; width: 47px; height: 48px; border-radius: 50%; background: linear-gradient(#fff, #e4e4e4); box-shadow: 0 3px 4px rgba(0, 0, 0, .5), 0 0 1px #999; }
.dot { position: absolute; right: 14px; top: 14px; width: 20px; height: 20px; border-radius: 50%; background: #e4e4e4; border: 2px solid #c8c8c8; }
.act .knob { left: auto; right: -1px; }
.act .dot { right: auto; left: 13px; background: #24a8ff; border-color: #1590ff; box-shadow: 0 0 5px #57b5ff; }
.lamp { width: 45px; height: 46px; margin-left: 39.500px; border-radius: 50%; border: 3px solid transparent; background: linear-gradient(135deg, #d8edff 8%, #55aaff 48%, #1e8fff 90%) padding-box, linear-gradient(135deg, #8f8f8f, #c8c8c8 50%, #f0f0f0) border-box; }
.tmp .lamp { margin-left: 43px; }
.cryo .lamp { margin-left: 36px; }
.gate .lamp { margin-left: 27px; }
.lamp.deep { background: linear-gradient(135deg, #c2d0ec 8%, #3f6dc4 48%, #0040b0 90%) padding-box, linear-gradient(135deg, #8f8f8f, #c8c8c8 50%, #f0f0f0) border-box; }
</style>
